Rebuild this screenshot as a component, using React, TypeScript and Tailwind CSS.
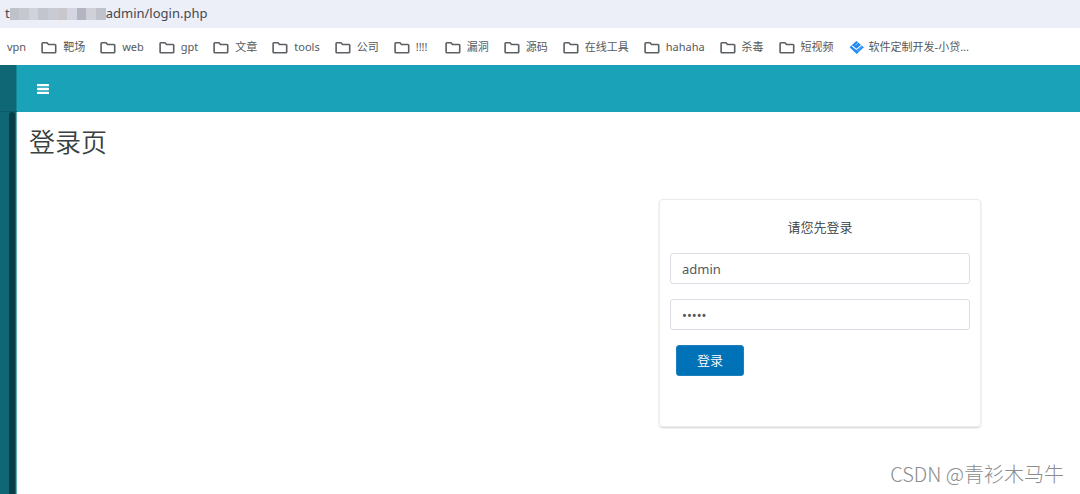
import React from "react";

const folders: string[] = [
  "靶场",
  "web",
  "gpt",
  "文章",
  "tools",
  "公司",
  "!!!!",
  "漏洞",
  "源码",
  "在线工具",
  "hahaha",
  "杀毒",
  "短视频",
];

const mosaic: string[] = [
  "bg-[#c0c2c9]",
  "bg-[#c6c8d0]",
  "bg-[#d0d1dc]",
  "bg-[#c3c5ce]",
  "bg-[#c8cad4]",
  "bg-[#c9c7cb]",
  "bg-[#d3d5e0]",
  "bg-[#b2b4c0]",
  "bg-[#cfd0d8]",
  "bg-[#bfc1cb]",
];

function FolderIcon() {
  return (
    <svg
      className="h-4 w-4 shrink-0"
      viewBox="0 0 16 16"
      fill="none"
      stroke="#5b5e62"
      strokeWidth="1.6"
      strokeLinejoin="round"
      aria-hidden="true"
    >
      <path d="M1.9 2.75H6l1.5 1.7h6.4c.5 0 .8.3.8.8v6.7c0 .5-.3.8-.8.8H1.9c-.5 0-.8-.3-.8-.8V3.55c0-.5.3-.8.8-.8Z" />
    </svg>
  );
}

function SiteIcon() {
  return (
    <svg className="h-4 w-4 shrink-0" viewBox="0 0 16 16" aria-hidden="true">
      <path d="M7.4 1 15 7.4 7.7 14 .6 7.2Z" fill="#2189f3" />
      <path d="M3.2 6 7.4 9.4 12.5 5.1" fill="none" stroke="#fff" strokeWidth="1.1" />
      <path d="m6.4 5.2 2.6-2.3M8.6 13 14.4 7.8" fill="none" stroke="#b5d9fc" strokeWidth=".8" />
      <path d="m7.7 11.4 5.3-4.6" fill="none" stroke="#8dc4fa" strokeWidth=".6" />
    </svg>
  );
}

function AddressBar() {
  return (
    <div className="flex h-7 items-center bg-[#eceef8] px-[5px] text-[13px] text-[#46484d]">
      <span>t</span>
      <span className="flex h-3 w-24 shrink-0" aria-hidden="true">
        {mosaic.map((tone, i) => (
          <span key={i} className={`flex-1 ${tone}`} />
        ))}
      </span>
      <span>admin/login.php</span>
    </div>
  );
}

function Bookmarks() {
  return (
    <nav
      aria-label="Bookmarks"
      className="flex h-[37px] items-center gap-[15px] overflow-hidden whitespace-nowrap px-[7px] pt-0.5 text-[11px] text-[#55585c]"
    >
      <a href="#vpn">vpn</a>
      {folders.map((name) => (
        <a key={name} href={`#${name}`} className="flex items-center gap-1.5">
          <FolderIcon />
          <span className="min-w-[14px]">{name}</span>
        </a>
      ))}
      <a href="#site" className="flex items-center gap-1">
        <SiteIcon />
        软件定制开发-小贷...
      </a>
    </nav>
  );
}

function LoginCard() {
  const field =
    "h-[31px] w-full rounded-[3px] border border-[#d9dfe5] bg-white px-[11px] text-[13px] text-[#55595c] outline-none";
  return (
    <form
      className="flex w-full max-w-[322px] flex-col rounded border border-[#ececec] px-[10px] pt-[15px] pb-[50px] shadow-[0_1px_2px_rgba(0,0,0,0.18)]"
      onSubmit={(e) => e.preventDefault()}
    >
      <p className="text-center text-[13px] leading-6 text-[#373a3c] [font-weight:350]">请您先登录</p>
      <div className="mt-[14px] flex flex-col gap-[15px]">
        <input aria-label="用户名" type="text" defaultValue="admin" className={field} />
        <input aria-label="密码" type="password" defaultValue="admin" className={field} />
        <button
          type="submit"
          className="ml-1.5 h-[31px] w-17 rounded-[3px] border border-[#1b80bd] bg-[#0072b8] text-[13px] text-white [font-weight:350]"
        >
          登录
        </button>
      </div>
    </form>
  );
}

export default function App() {
  return (
    <div className="relative flex min-h-screen flex-col bg-white font-['Noto_Sans','Noto_Sans_CJK_SC',sans-serif]">
      <AddressBar />
      <Bookmarks />
      <div className="flex flex-1">
        <aside className="flex w-[17px] shrink-0 flex-col bg-[#0f6674]">
          <div className="h-[47px] border-b border-[#0c5b68] shadow-[inset_-1px_0_0_#148799]" />
          <div className="flex flex-1 border-r border-[#5eafbd] pl-[9px]">
            <div className="w-1.5 rounded-t-full bg-[#083d46]" />
          </div>
        </aside>
        <div className="flex min-w-0 flex-1 flex-col">
          <header className="flex h-[47px] items-center bg-[#19a2b8] px-5">
            <button type="button" aria-label="菜单" className="text-white">
              <svg className="h-3 w-3" viewBox="0 0 12 12" fill="currentColor" aria-hidden="true">
                <rect y=".9" width="12" height="2.4" rx=".6" />
                <rect y="4.8" width="12" height="2.4" rx=".6" />
                <rect y="8.7" width="12" height="2.4" rx=".6" />
              </svg>
            </button>
          </header>
          <main className="flex flex-1 flex-col px-3 pt-3">
            <h1 className="text-[26px] leading-9 text-[#3a3f41] [font-weight:350]">登录页</h1>
            <div className="mt-[39px] flex justify-end pr-[87px]">
              <LoginCard />
            </div>
          </main>
        </div>
      </div>
      <p className="absolute right-4 bottom-1 font-['Noto_Sans_CJK_SC',sans-serif] text-[20px] leading-8 text-[#8c8c8c] [font-weight:300] [text-shadow:1px_1px_0_#ffffff]">
        CSDN @青衫木马牛
      </p>
    </div>
  );
}
